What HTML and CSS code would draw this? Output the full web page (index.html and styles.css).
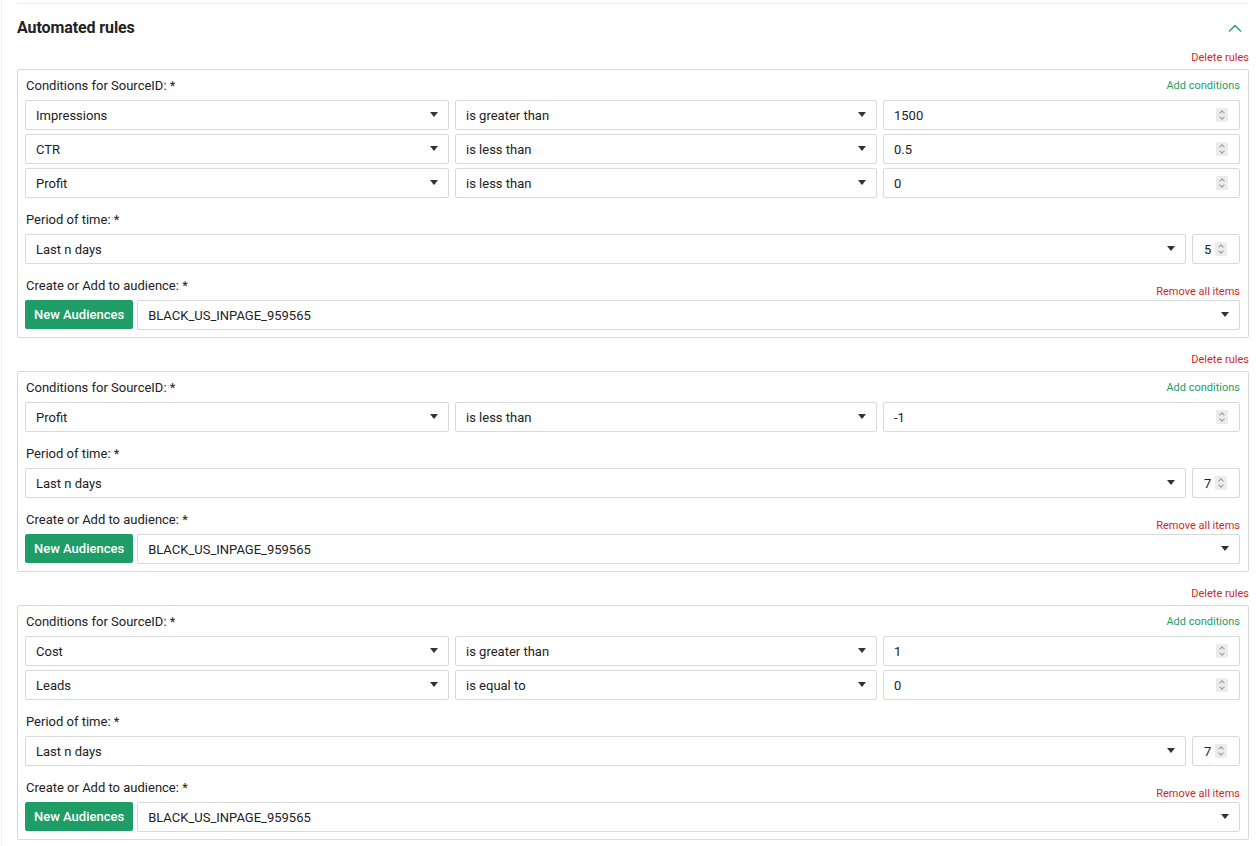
FILE: index.html
```html
<!DOCTYPE html>
<html lang="en">
<head>
  <meta charset="utf-8" />
  <title>Automated rules</title>
  <meta name="viewport" content="width=device-width, initial-scale=1" />
  <link rel="stylesheet" href="styles.css">
</head>
<body>
  <div class="page">
    <div class="panel">
      <div class="panel-head">
        <h2>Automated rules</h2>
        <svg class="chevron" width="14" height="8" viewBox="0 0 14 8"><path d="M1 7.5 L7 1.5 L13 7.5" fill="none" stroke="#1f9d66" stroke-width="1.3"/></svg>
      </div>

      <!-- rule 1 -->
      <div class="rule-actions"><a class="del">Delete rules</a></div>
      <div class="rule">
        <div class="label-row"><span>Conditions for SourceID: *</span><a class="add">Add conditions</a></div>
        <div class="conds">
          <div class="cond">
            <div class="field select">Impressions<i class="caret"></i></div>
            <div class="field select">is greater than<i class="caret"></i></div>
            <div class="field num">1500<i class="spin"></i></div>
          </div>
          <div class="cond">
            <div class="field select">CTR<i class="caret"></i></div>
            <div class="field select">is less than<i class="caret"></i></div>
            <div class="field num">0.5<i class="spin"></i></div>
          </div>
          <div class="cond">
            <div class="field select">Profit<i class="caret"></i></div>
            <div class="field select">is less than<i class="caret"></i></div>
            <div class="field num">0<i class="spin"></i></div>
          </div>
        </div>
        <div class="label-row sec"><span>Period of time: *</span></div>
        <div class="period">
          <div class="field select">Last n days<i class="caret"></i></div>
          <div class="field num small">5<i class="spin"></i></div>
        </div>
        <div class="label-row sec"><span>Create or Add to audience: *</span><a class="remove">Remove all items</a></div>
        <div class="audience">
          <button type="button">New Audiences</button>
          <div class="field select">BLACK_US_INPAGE_959565<i class="caret"></i></div>
        </div>
      </div>

      <!-- rule 2 -->
      <div class="rule-actions"><a class="del">Delete rules</a></div>
      <div class="rule">
        <div class="label-row"><span>Conditions for SourceID: *</span><a class="add">Add conditions</a></div>
        <div class="conds">
          <div class="cond">
            <div class="field select">Profit<i class="caret"></i></div>
            <div class="field select">is less than<i class="caret"></i></div>
            <div class="field num">-1<i class="spin"></i></div>
          </div>
        </div>
        <div class="label-row sec"><span>Period of time: *</span></div>
        <div class="period">
          <div class="field select">Last n days<i class="caret"></i></div>
          <div class="field num small">7<i class="spin"></i></div>
        </div>
        <div class="label-row sec"><span>Create or Add to audience: *</span><a class="remove">Remove all items</a></div>
        <div class="audience">
          <button type="button">New Audiences</button>
          <div class="field select">BLACK_US_INPAGE_959565<i class="caret"></i></div>
        </div>
      </div>

      <!-- rule 3 -->
      <div class="rule-actions"><a class="del">Delete rules</a></div>
      <div class="rule">
        <div class="label-row"><span>Conditions for SourceID: *</span><a class="add">Add conditions</a></div>
        <div class="conds">
          <div class="cond">
            <div class="field select">Cost<i class="caret"></i></div>
            <div class="field select">is greater than<i class="caret"></i></div>
            <div class="field num">1<i class="spin"></i></div>
          </div>
          <div class="cond">
            <div class="field select">Leads<i class="caret"></i></div>
            <div class="field select">is equal to<i class="caret"></i></div>
            <div class="field num">0<i class="spin"></i></div>
          </div>
        </div>
        <div class="label-row sec"><span>Period of time: *</span></div>
        <div class="period">
          <div class="field select">Last n days<i class="caret"></i></div>
          <div class="field num small">7<i class="spin"></i></div>
        </div>
        <div class="label-row sec"><span>Create or Add to audience: *</span><a class="remove">Remove all items</a></div>
        <div class="audience">
          <button type="button">New Audiences</button>
          <div class="field select">BLACK_US_INPAGE_959565<i class="caret"></i></div>
        </div>
      </div>
    </div>
  </div>
</body>
</html>
```

FILE: styles.css
```css
:root {
  --green:#1f9d66;
  --red:#d41f26;
  --line:#d9d9d9;
  --text:#222;
}
body {
  margin:0;
  background:#fff;
  font-family:Roboto,'Liberation Sans',sans-serif;
  font-size:13px;
  color:var(--text);
}
.page {
  margin-left:1px;
  border-left:1px solid #f1f1f1;
  padding:3px 8px 0 15px;
  min-height:843px;
}
.panel {
  border-top:1px solid #ececec;
}
.panel-head {
  display:flex;
  justify-content:space-between;
  align-items:center;
  height:46px;
}
.panel-head h2 {
  margin:0;
  font-size:16px;
  font-weight:700;
  color:#222;
  letter-spacing:-.1px;
}
.chevron {
  margin-right:7px;
  margin-top:2px;
}
.rule-actions {
  display:flex;
  justify-content:flex-end;
  line-height:16px;
  margin-bottom:3px;
}
.rule + .rule-actions {
  margin-top:14px;
}
.del, .remove {
  color:var(--red);
  font-size:11px;
}
.add {
  color:var(--green);
  font-size:11px;
}
.rule {
  border:1px solid var(--line);
  border-radius:2px;
  padding:8px 8px 7px 7px;
}
.label-row {
  display:flex;
  justify-content:space-between;
  align-items:flex-end;
  line-height:16px;
  margin-bottom:6px;
  padding-left:1px;
}
.label-row.sec {
  margin-top:14px;
}
.label-row .remove {
  position:relative;
  top:6px;
}
.conds {
  display:flex;
  flex-direction:column;
  gap:4px;
}
.cond {
  display:grid;
  grid-template-columns:424px 422px 1fr;
  gap:6px;
}
.field {
  display:flex;
  align-items:center;
  justify-content:space-between;
  height:30px;
  box-sizing:border-box;
  border:1px solid var(--line);
  border-radius:2px;
  padding:0 9px 0 10px;
  background:#fff;
  color:#222;
}
.caret {
  width:0;
  height:0;
  border-left:4.5px solid transparent;
  border-right:4.5px solid transparent;
  border-top:5px solid #333;
  margin-right:1px;
  margin-top:-2px;
}
.spin {
  position:relative;
  width:12px;
  height:14px;
  background:#ececec;
  border-radius:1px;
  margin-right:2px;
}
.spin::before, .spin::after {
  content:'';
  position:absolute;
  left:4px;
  width:3px;
  height:3px;
  border-left:1px solid #999;
  border-top:1px solid #999;
}
.spin::before {
  top:3px;
  transform:rotate(45deg);
}
.spin::after {
  bottom:3px;
  transform:rotate(225deg);
}
.period {
  display:grid;
  grid-template-columns:1fr 48px;
  gap:6px;
}
.num.small {
  padding:0 10px 0 11px;
}
.audience {
  display:flex;
  gap:4px;
  align-items:flex-start;
}
.audience button {
  height:29px;
  border:none;
  border-radius:2px;
  background:var(--green);
  color:#fff;
  font-family:inherit;
  font-size:13px;
  font-weight:500;
  padding:0 9px;
  white-space:nowrap;
  cursor:pointer;
}
.audience .field {
  flex:1;
}
```
